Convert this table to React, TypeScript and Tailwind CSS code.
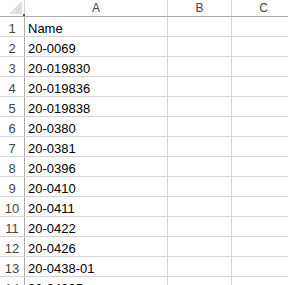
const rows = [
  "Name",
  "20-0069",
  "20-019830",
  "20-019836",
  "20-019838",
  "20-0380",
  "20-0381",
  "20-0396",
  "20-0410",
  "20-0411",
  "20-0422",
  "20-0426",
  "20-0438-01",
  "20-04395",
];

const cols = [
  { label: "A", width: "w-[143px]" },
  { label: "B", width: "w-[64px]" },
  { label: "C", width: "w-[64px]" },
];

export default function App() {
  return (
    <div
      className="w-[288px] h-[285px] overflow-hidden bg-white text-[13px] text-black"
      style={{ fontFamily: '"Liberation Sans", Arial, sans-serif' }}
    >
      <div className="relative flex h-[17px] border-b border-[#ababab]">
        <div className="relative w-[25px] shrink-0 border-r border-[#d4d4d4]">
          <svg width="14" height="14" viewBox="0 0 14 14" className="absolute right-[1px] bottom-[1px]">
            <polygon points="13,0 13,13 0,13" fill="#dfdfdf" />
          </svg>
        </div>
        {cols.map((c) => (
          <div
            key={c.label}
            className={`${c.width} shrink-0 border-r border-[#d4d4d4] flex items-center justify-center text-[12px] leading-none text-[#444]`}
          >
            {c.label}
          </div>
        ))}
        <div className="absolute left-[23px] top-[14px] w-[2px] h-[2px] bg-[#217346]" />
      </div>
      {rows.map((name, i) => (
        <div key={i} className="flex h-[20px] border-b border-[#d4d4d4]">
          <div className="w-[25px] shrink-0 border-r border-[#ababab] flex items-end justify-center leading-[15px] text-[#444]">
            {i + 1}
          </div>
          <div className="w-[143px] shrink-0 border-r border-[#d4d4d4] flex items-end pl-[3px] leading-[15px] whitespace-nowrap">
            {name}
          </div>
          <div className="w-[64px] shrink-0 border-r border-[#d4d4d4]" />
          <div className="w-[64px] shrink-0 border-r border-[#d4d4d4]" />
        </div>
      ))}
    </div>
  );
}
